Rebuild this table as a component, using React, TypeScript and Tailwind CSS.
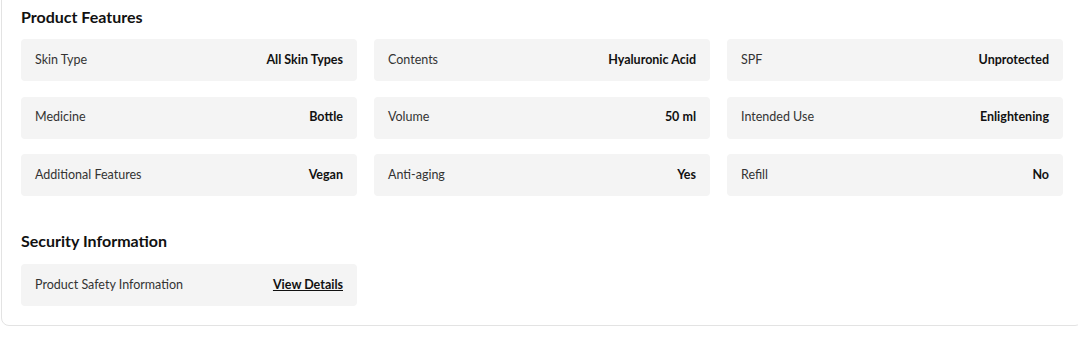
import React from 'react';

interface Feature {
  label: string;
  value: string;
}

const FEATURES: Feature[] = [
  { label: 'Skin Type', value: 'All Skin Types' },
  { label: 'Contents', value: 'Hyaluronic Acid' },
  { label: 'SPF', value: 'Unprotected' },
  { label: 'Medicine', value: 'Bottle' },
  { label: 'Volume', value: '50 ml' },
  { label: 'Intended Use', value: 'Enlightening' },
  { label: 'Additional Features', value: 'Vegan' },
  { label: 'Anti-aging', value: 'Yes' },
  { label: 'Refill', value: 'No' },
];

const Row = function Row({ label, children }: { label: string; children: React.ReactNode }) {
  return (
    <div className="flex items-center justify-between h-[42px] px-[14px] rounded bg-[#f4f4f4]">
      <span className="text-[12.5px] text-[#333]">{label}</span>
      <span className="text-[12.5px] font-bold text-[#111]">{children}</span>
    </div>
  );
};

export default function App() {
  return (
    <div className="w-full overflow-hidden bg-white" style={{ fontFamily: 'Lato, "Liberation Sans", sans-serif' }}>
      <div className="ml-[1px] -mt-[14px] w-[1082px] border border-[#e3e3e3] rounded-lg px-[19px] pt-[17px] pb-[19px]">
        <h2 className="text-[16px] font-bold text-[#111] leading-[26px]">Product Features</h2>
        <div className="mt-[9px] grid grid-cols-3 gap-x-[17px] gap-y-[15.5px]">
          {FEATURES.map((f) => (
            <Row key={f.label} label={f.label}>{f.value}</Row>
          ))}
        </div>
        <h2 className="mt-[32px] text-[16px] font-bold text-[#111] leading-[26px]">Security Information</h2>
        <div className="mt-[10px] grid grid-cols-3 gap-x-[17px]">
          <Row label="Product Safety Information">
            <a href="#" className="underline">View Details</a>
          </Row>
        </div>
      </div>
    </div>
  );
}
